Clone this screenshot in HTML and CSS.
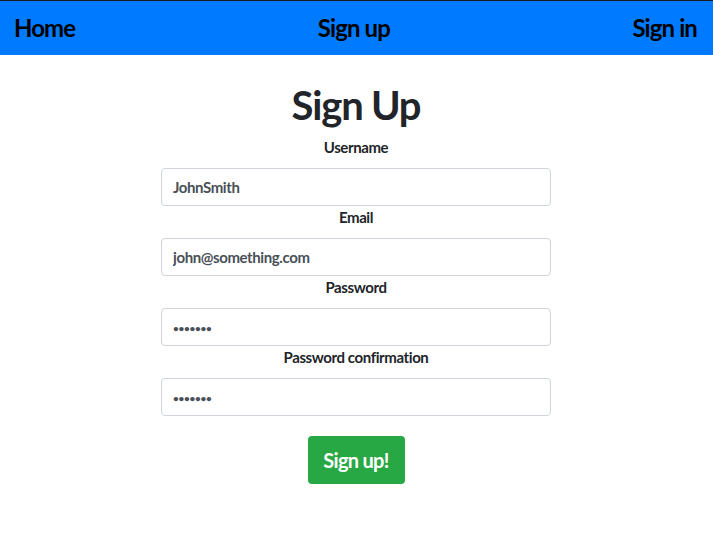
FILE: index.html
```html
<!DOCTYPE html>
<html>
<head>
<meta charset="utf-8">
<link rel="stylesheet" href="styles.css">
</head>
<body>
<nav class="navbar">
  <a class="nav-link" href="#">Home</a>
  <a class="nav-link" href="#">Sign up</a>
  <a class="nav-link" href="#">Sign in</a>
</nav>
<main class="content">
  <h1 class="title">Sign Up</h1>
  <form class="form">
    <div class="group">
      <label class="label">Username</label>
      <input class="input" type="text" value="JohnSmith">
    </div>
    <div class="group">
      <label class="label">Email</label>
      <input class="input" type="text" value="john@something.com">
    </div>
    <div class="group">
      <label class="label">Password</label>
      <input class="input input-password" type="password" value="1234567">
    </div>
    <div class="group">
      <label class="label">Password confirmation</label>
      <input class="input input-password" type="password" value="1234567">
    </div>
    <button class="btn" type="button">Sign up!</button>
  </form>
</main>
</body>
</html>
```
FILE: styles.css
```css
* { box-sizing: border-box; }
body {
  margin: 0;
  font-family: Lato, "Open Sans", sans-serif;
  color: #212529;
  background: #fff;
}
.navbar {
  border-top: 1px solid #1a1a1a;
  background: #007bff;
  height: 55px;
  display: flex;
  justify-content: space-between;
  align-items: center;
  padding: 0 16px 2px 14px;
}
.nav-link {
  color: #000;
  text-decoration: none;
  font-weight: 700;
  font-size: 24px;
  letter-spacing: -0.9px;
}
.content {
  display: flex;
  flex-direction: column;
  align-items: center;
  padding-right: 1px;
}
.title {
  margin: 24px 0 6px;
  font-size: 40px;
  font-weight: 700;
  letter-spacing: -1.2px;
  line-height: 52px;
}
.form {
  width: 390px;
  display: flex;
  flex-direction: column;
  align-items: center;
}
.group {
  width: 100%;
  display: flex;
  flex-direction: column;
  align-items: center;
}
.label {
  font-weight: 700;
  font-size: 15px;
  letter-spacing: -0.4px;
  line-height: 20px;
  margin: 0 0 11px;
}
.input {
  width: 100%;
  height: 38px;
  border: 1px solid #ced4da;
  border-radius: 4px;
  padding: 0 11px;
  font-family: inherit;
  font-weight: 700;
  font-size: 15px;
  letter-spacing: -0.4px;
  color: #495057;
  margin-bottom: 1px;
}
.input-password {
  font-size: 10px;
  letter-spacing: -0.3px;
  padding-top: 2px;
}
.btn {
  margin-top: 19px;
  width: 97px;
  height: 48px;
  background: #28a745;
  color: #fff;
  border: none;
  border-radius: 4px;
  font-family: inherit;
  font-weight: 700;
  font-size: 20px;
  letter-spacing: -0.7px;
}
```
